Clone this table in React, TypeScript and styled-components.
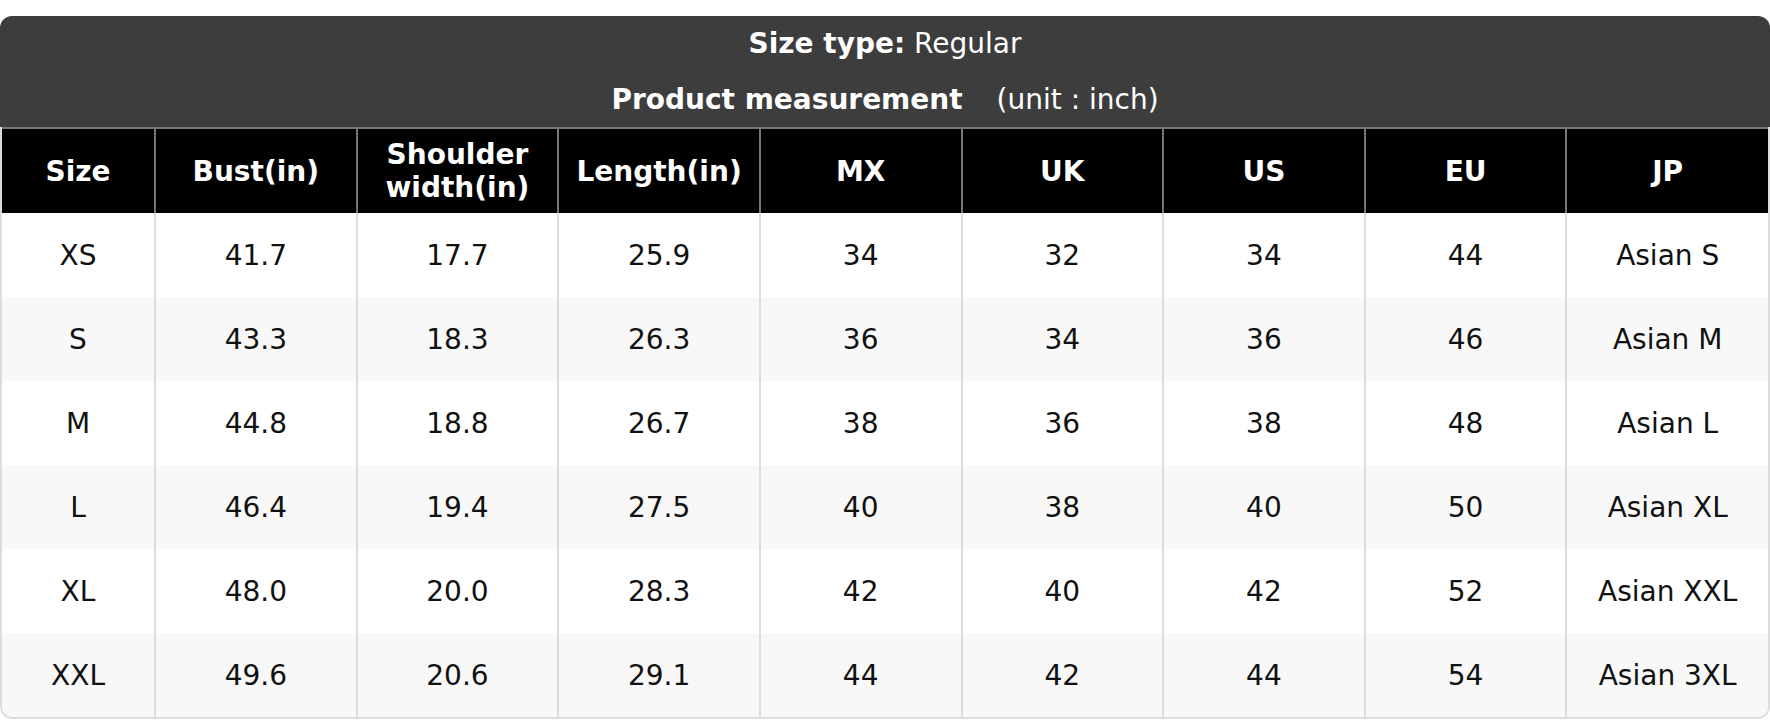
import React from 'react';
import styled, { createGlobalStyle } from 'styled-components';

const GlobalStyle = createGlobalStyle`
  html, body {
    margin: 0;
    padding: 0;
    background: #fff;
  }
  body {
    font-family: "DejaVu Sans", Verdana, sans-serif;
  }
`;

const Page = styled.div`
  padding-top: 16px;
`;

const Card = styled.div`
  border-radius: 12px;
  overflow: hidden;
`;

const TitleBox = styled.div`
  background: #3d3d3d;
  color: #fff;
  padding: 11px 0 10px;
  display: flex;
  flex-direction: column;
  align-items: center;
  gap: 22px;
  font-size: 28px;
  line-height: 34px;
`;

const TitleLine = styled.div<{ $gap?: number }>`
  display: flex;
  align-items: baseline;
  gap: ${({ $gap }) => $gap ?? 0}px;
`;

const Strong = styled.span`
  font-weight: bold;
`;

const TableFrame = styled.div`
  border: 2px solid #dcdcdc;
  border-top: none;
  border-radius: 0 0 12px 12px;
  overflow: hidden;
`;

const Table = styled.table`
  width: 100%;
  table-layout: fixed;
  border-collapse: collapse;
  font-size: 28px;
`;

const HeadCell = styled.th`
  background: #000;
  color: #fff;
  font-weight: bold;
  height: 84px;
  padding: 0 6px;
  line-height: 33px;
  text-align: center;
  border-top: 2px solid #777;
  border-left: 2px solid #777;
  &:first-child { border-left: none; }
`;

const Row = styled.tr<{ $alt: boolean }>`
  background: ${({ $alt }) => ($alt ? '#f8f8f8' : '#fff')};
`;

const Cell = styled.td`
  height: 84px;
  padding: 0;
  text-align: center;
  color: #111;
  border-left: 2px solid #dcdcdc;
  &:first-child { border-left: none; }
`;

const headers = ['Size', 'Bust(in)', 'Shoulder width(in)', 'Length(in)', 'MX', 'UK', 'US', 'EU', 'JP'];

const rows = [
  ['XS', '41.7', '17.7', '25.9', '34', '32', '34', '44', 'Asian S'],
  ['S', '43.3', '18.3', '26.3', '36', '34', '36', '46', 'Asian M'],
  ['M', '44.8', '18.8', '26.7', '38', '36', '38', '48', 'Asian L'],
  ['L', '46.4', '19.4', '27.5', '40', '38', '40', '50', 'Asian XL'],
  ['XL', '48.0', '20.0', '28.3', '42', '40', '42', '52', 'Asian XXL'],
  ['XXL', '49.6', '20.6', '29.1', '44', '42', '44', '54', 'Asian 3XL'],
];

export default function App() {
  return (
    <Page>
      <GlobalStyle />
      <Card>
        <TitleBox>
          <TitleLine>
            <span><Strong>Size type:</Strong> Regular</span>
          </TitleLine>
          <TitleLine $gap={34}>
            <Strong>Product measurement</Strong>
            <span>(unit : inch)</span>
          </TitleLine>
        </TitleBox>
        <TableFrame>
          <Table>
            <colgroup>
              <col style={{ width: 153 }} />
              {headers.slice(1).map((h) => <col key={h} />)}
            </colgroup>
            <thead>
              <tr>
                {headers.map((h) => <HeadCell key={h}>{h}</HeadCell>)}
              </tr>
            </thead>
            <tbody>
              {rows.map((r, i) => (
                <Row key={r[0]} $alt={i % 2 === 1}>
                  {r.map((c, j) => <Cell key={j}>{c}</Cell>)}
                </Row>
              ))}
            </tbody>
          </Table>
        </TableFrame>
      </Card>
    </Page>
  );
}
